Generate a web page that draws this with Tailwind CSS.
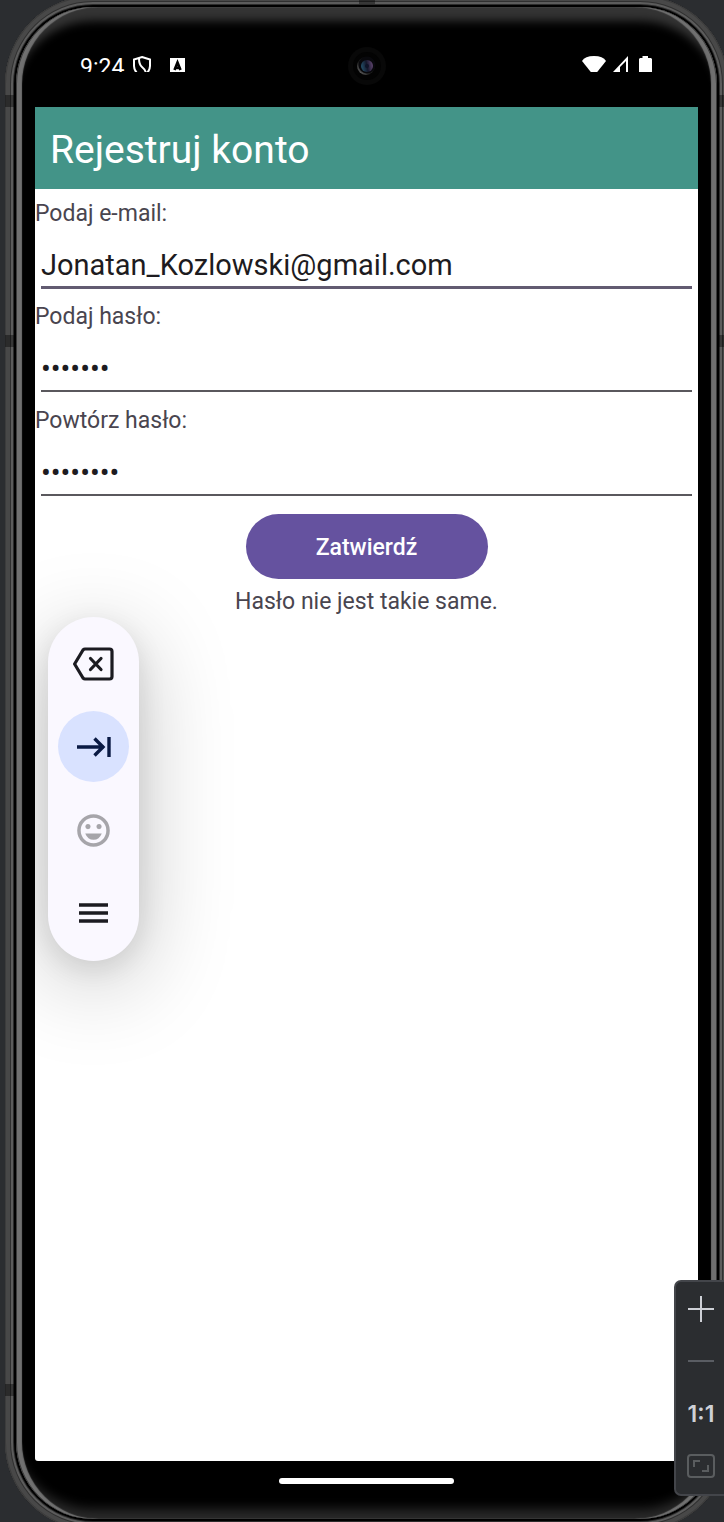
<!DOCTYPE html>
<html lang="pl">
<head>
<meta charset="utf-8">
<meta name="viewport" content="width=device-width, initial-scale=1">
<title>Rejestruj konto</title>
<script src="https://cdn.jsdelivr.net/npm/@tailwindcss/browser@4"></script>
</head>
<body class="relative h-screen overflow-hidden bg-[#2b2d30] font-['Roboto',sans-serif]">

<!-- Device body: metal rim, then the glass -->
<div class="relative -mt-1 -mr-1 ml-[5px] h-[calc(100vh+12px)] rounded-[88px] bg-black p-[11px] shadow-[inset_0_0_0_1px_#3c3c3c,inset_0_0_0_5px_#484848,inset_0_0_0_6px_#303030,inset_0_0_0_8px_#5c5c5c,inset_0_0_0_9px_#2c2c2c]">
  <!-- Antenna bands -->
  <span class="absolute top-[99px] left-0 h-3 w-[9px] bg-black/40"></span>
  <span class="absolute top-[339px] left-0 h-3 w-[9px] bg-black/40"></span>
  <span class="absolute bottom-[134px] left-0 h-3 w-[9px] bg-black/40"></span>
  <span class="absolute top-[99px] right-0 h-3 w-[9px] bg-black/40"></span>
  <span class="absolute top-[339px] right-0 h-3 w-[9px] bg-black/40"></span>
  <span class="absolute top-0 left-1/2 h-2 w-4 -translate-x-1/2 bg-black/40"></span>

  <div class="flex h-full flex-col rounded-[77px] bg-black px-[19px] shadow-[inset_1px_0_0_#3a3a3a,inset_-1px_0_0_#3a3a3a,inset_6px_0_1px_#707070,inset_-6px_0_1px_#707070,inset_0_18px_10px_-4px_#343434,inset_0_-14px_12px_-4px_#2a2a2a]">

    <!-- Status bar -->
    <header class="relative flex h-[100px] shrink-0 items-start justify-between pt-[48px] pr-[45px] pl-[45px] text-white">
      <div class="flex h-[17px] items-start overflow-hidden">
        <span class="text-[23px] leading-[26px]">9:24</span>
        <svg class="ml-2 h-[24px] w-5" viewBox="0 0 20 24" fill="none" stroke="currentColor" stroke-width="2"><path d="M10 2 L18 4.500 V11 C18 16 15 19 10 22 C5 19 2 16 2 11 V4.500 Z M7 3.500 C7 8 7.500 10 10 12 C12.500 14 14 16 14 19"/></svg>
        <svg class="ml-[18px] h-5 w-4" viewBox="0 0 16 20"><path fill="#fff" d="M0 3H15V18H0Z"/><path fill="none" stroke="#000" stroke-width="2.600" d="M4.500 15 L7.500 7.500 L10.500 15 M5 13 H10"/></svg>
      </div>
      <div class="flex h-[17px] items-start gap-[7px] overflow-hidden">
        <svg class="h-5 w-6" viewBox="0 0 24 20" fill="currentColor"><path d="M0 6 Q3 1 12 1 Q21 1 24 6 L12 21Z"/></svg>
        <svg class="h-5 w-[17px]" viewBox="0 0 17 20" fill="currentColor"><path fill-rule="evenodd" d="M0 17 L15 1 V17H13V6L7 12V17Z"/></svg>
        <svg class="ml-[2px] h-5 w-[14px]" viewBox="0 0 14 20" fill="currentColor"><path d="M3.500 1H9V3H12L13 4V18H0V4L1 3H3.500Z"/></svg>
      </div>
      <svg class="absolute top-[40px] left-1/2 size-[38px] -translate-x-1/2" viewBox="0 0 38 38">
        <defs>
          <linearGradient id="rim" x1="0" y1="1" x2="1" y2="0"><stop offset="0" stop-color="#777"/><stop offset=".4" stop-color="#1c1c1c"/><stop offset="1" stop-color="#111"/></linearGradient>
          <linearGradient id="lens" x1="0" y1=".6" x2="1" y2=".4"><stop offset="0" stop-color="#24516a"/><stop offset=".5" stop-color="#15182c"/><stop offset="1" stop-color="#60456f"/></linearGradient>
        </defs>
        <circle cx="19" cy="19" r="19" fill="#080808"/><circle cx="19" cy="19" r="14" fill="#030303"/>
        <circle cx="18" cy="19" r="9" fill="url(#rim)"/><circle cx="19" cy="18" r="8.500" fill="#08080c"/><circle cx="19" cy="19" r="6" fill="url(#lens)"/><circle cx="19" cy="19" r="2" fill="#0f1428"/>
      </svg>
    </header>

    <!-- App -->
    <main class="relative flex min-h-0 flex-1 flex-col overflow-hidden rounded-b-[3px] bg-white">
      <h1 class="flex h-[82px] shrink-0 items-center bg-[#439488] px-[15px] pt-1 text-[39px] text-white">Rejestruj konto</h1>

      <form class="flex flex-col pt-[10px] text-[23px] text-[#49454f]">
        <label for="email" class="h-[30px] leading-[30px]">Podaj e-mail:</label>
        <input id="email" type="email" value="Jonatan_Kozlowski@gmail.com" class="mx-[6px] mb-[13px] h-[60px] border-b-[3px] border-[#625b71] pt-[15px] text-[29px] text-[#1d1b20] outline-none">
        <label for="pass" class="h-[30px] leading-[30px]">Podaj hasło:</label>
        <input id="pass" type="password" value="haslo12" class="mx-[6px] mb-[14px] h-[60px] border-b-2 border-[#5a585d] pt-[15px] text-[29px] text-[#1d1b20] outline-none">
        <label for="pass2" class="h-[30px] leading-[30px]">Powtórz hasło:</label>
        <input id="pass2" type="password" value="haslo123" class="mx-[6px] mb-[18px] h-[60px] border-b-2 border-[#5a585d] pt-[15px] text-[29px] text-[#1d1b20] outline-none">
        <button type="button" class="h-[65px] w-[242px] self-center rounded-full bg-[#65529f] pt-[3px] font-medium text-white">Zatwierdź</button>
        <p class="mt-2 text-center leading-[30px]" role="status">Hasło nie jest takie same.</p>
      </form>

      <!-- Floating input toolbar -->
      <div class="absolute top-[510px] left-[13px] flex h-[344px] w-[91px] flex-col items-center justify-between rounded-full bg-[#faf8ff] pt-[11px] pb-3 shadow-[0_20px_90px_4px_rgba(0,0,0,0.22),0_8px_28px_rgba(0,0,0,0.10)]">
        <button type="button" aria-label="Usuń" class="flex size-[71px] items-center justify-center text-[#1b1b21]">
          <svg class="h-[34px] w-[42px]" viewBox="0 0 42 34" fill="none" stroke="currentColor" stroke-width="3.200" stroke-linejoin="round" stroke-linecap="round"><path d="M12 2H36.500Q39 2 39 4.500V29.500Q39 32 36.500 32H12Q11 32 10 31L1.600 17L10 3Q11 2 12 2Z"/><path d="M17.500 11.500L28 22.500M28 11.500L17.500 22.500"/></svg>
        </button>
        <button type="button" aria-label="Następne pole" class="flex size-[71px] items-center justify-center rounded-full bg-[#d9e2ff] text-[#0a1a44]">
          <svg class="h-5 w-9" viewBox="0 0 36 20" fill="none" stroke="currentColor" stroke-width="3.400"><path d="M1 10H28M18.500 1.500L27 10L18.500 18.500M33 0V20"/></svg>
        </button>
        <button type="button" aria-label="Emoji" class="flex size-[71px] items-center justify-center text-[#a6a5aa]">
          <svg class="size-[33px]" viewBox="0 0 34 34" fill="currentColor"><circle cx="17" cy="17" r="15" fill="none" stroke="currentColor" stroke-width="3.600"/><circle cx="11.300" cy="13" r="2.600"/><circle cx="22.700" cy="13" r="2.600"/><path d="M8.500 20H25.500Q23 26.500 17 26.500T8.500 20Z"/></svg>
        </button>
        <button type="button" aria-label="Menu" class="flex size-[71px] items-center justify-center text-[#1b1b21]">
          <svg class="h-5 w-[29px]" viewBox="0 0 29 20" fill="none" stroke="currentColor" stroke-width="3.400"><path d="M0 2H29M0 10H29M0 18H29"/></svg>
        </button>
      </div>
    </main>

    <!-- Gesture bar -->
    <div class="flex h-[58px] shrink-0 justify-center pt-[17px]">
      <span class="h-[6px] w-[175px] rounded-full bg-white"></span>
    </div>
  </div>
</div>

<!-- Zoom controls -->
<aside class="absolute right-0 bottom-[26px] flex h-[216px] w-[50px] flex-col items-center rounded-l-[7px] border-2 border-r-0 border-[#43454a] bg-[#2b2d30] pl-[2px] text-[#ced0d6]">
  <button type="button" aria-label="Powiększ" class="flex h-[54px] w-full items-center justify-center"><svg class="size-[26px]" viewBox="0 0 26 26" stroke="currentColor" stroke-width="2"><path d="M0 13H26M13 0V26"/></svg></button>
  <button type="button" aria-label="Pomniejsz" class="flex h-[50px] w-full items-center justify-center text-[#5a5d63]"><svg class="h-[2px] w-[26px]" viewBox="0 0 26 2" stroke="currentColor" stroke-width="2"><path d="M0 1H26"/></svg></button>
  <button type="button" class="flex h-[56px] w-full items-center justify-center font-['Inter',sans-serif] text-[23px] font-semibold">1:1</button>
  <button type="button" aria-label="Dopasuj do ekranu" class="flex h-[48px] w-full items-center justify-center text-[#5a5d5f]"><svg class="h-6 w-7" viewBox="0 0 28 24" fill="none" stroke="currentColor" stroke-width="2"><rect x="1" y="1" width="26" height="22" rx="3"/><path d="M7 13V7H13M15 17H21V11"/></svg></button>
</aside>
</body>
</html>
